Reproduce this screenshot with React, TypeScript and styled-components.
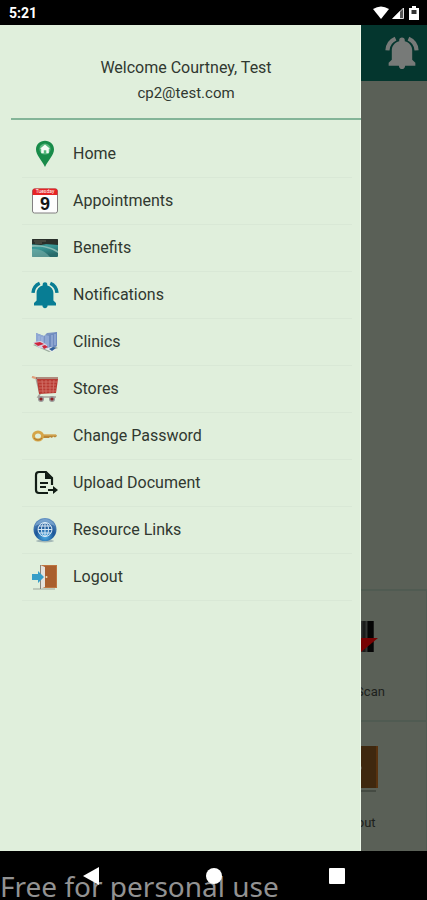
import React from "react";
import styled, { createGlobalStyle } from "styled-components";

const GlobalStyle = createGlobalStyle`
  *, *::before, *::after { box-sizing: border-box; }
  body { margin: 0; background: #000; }
  button { border: 0; padding: 0; background: none; font: inherit; cursor: pointer; }
  a { color: inherit; text-decoration: none; }
`;

const Screen = styled.div`
  min-height: 100vh;
  display: flex;
  flex-direction: column;
  background: #000;
  color: #303830;
  font-family: Roboto, "Liberation Sans", sans-serif;
`;

const StatusBar = styled.div`
  height: 25px;
  padding: 0 6px 0 9px;
  display: flex;
  align-items: center;
  justify-content: space-between;
  color: #fff;
  font-size: 14px;
  font-weight: 700;
  line-height: 20px;
`;

const StatusIcons = styled.div`
  display: flex;
  align-items: center;
  gap: 2px;
`;

const Stage = styled.div`
  position: relative;
  flex: 1;
  display: flex;
  flex-direction: column;
`;

const Page = styled.main`
  flex: 1;
  display: flex;
  flex-direction: column;
  justify-content: space-between;
  background: #5a6057;
`;

const AppBar = styled.header`
  height: 56px;
  padding: 0 8px;
  display: flex;
  align-items: center;
  justify-content: flex-end;
  background: #04362e;
`;

const BellButton = styled.button`
  display: flex;
`;

const Tiles = styled.div`
  display: grid;
  grid-template-columns: repeat(3, 1fr);
  grid-auto-rows: 131px;
`;

const Tile = styled.a`
  grid-column: 3;
  padding-top: 24px;
  display: flex;
  flex-direction: column;
  align-items: center;
  gap: 23px;
  border-top: 2px solid #505b52;
  border-right: 1px solid #505b52;
  color: #1d211c;
  font-size: 13px;
  line-height: 16px;
`;

const Drawer = styled.aside`
  position: absolute;
  inset: 0 66px 0 0;
  background: #e0efdc;
  box-shadow: inset -1px 0 #edf8e9;
`;

const Profile = styled.div`
  margin-left: 11px;
  padding: 33px 0 15px;
  display: flex;
  flex-direction: column;
  align-items: center;
  gap: 5px;
  border-bottom: 2px solid #84b598;
  line-height: 20px;
`;

const Welcome = styled.div`
  font-size: 16px;
`;

const Email = styled.div`
  font-size: 15px;
`;

const Menu = styled.nav`
  margin: 11px 9px 0 22px;
  display: flex;
  flex-direction: column;
`;

const MenuItem = styled.a`
  height: 47px;
  padding-left: 9px;
  display: flex;
  align-items: center;
  gap: 14px;
  border-bottom: 1px solid #d9e8d6;
  font-size: 16px;
  line-height: 20px;
`;

const NavBar = styled.footer`
  position: relative;
  height: 49px;
  display: grid;
  grid-template-columns: repeat(3, 1fr);
  justify-items: center;
  padding: 0 29px;
`;

const NavButton = styled.button`
  position: relative;
  z-index: 1;
  width: 48px;
  height: 49px;
  display: flex;
  align-items: center;
  justify-content: center;
`;

const Watermark = styled.div`
  position: absolute;
  left: 0;
  bottom: 0;
  color: #929292;
  font-family: "Noto Sans", sans-serif;
  font-size: 28px;
  line-height: 28px;
  white-space: nowrap;
`;

const Bell = ({ size, color }: { size: number; color: string }) => (
  <svg width={size} height={size} viewBox="0 0 28 28" fill="none" aria-hidden="true">
    <path
      d="M14 1.2c-1.4 0-2.3.9-2.3 2.2v1C7.9 5.4 5.600 8.4 5.600 12v7.5L3 22v2.400h8.400c.2 1.800 1.200 2.800 2.600 2.800s2.400-1 2.600-2.800H25V22L22.400 19.500V12c0-3.600-2.300-6.600-6.100-7.600v-1c0-1.300-.900-2.200-2.300-2.200z"
      fill={color}
    />
    <path d="M2 11.800C2.300 7.300 4.600 4 8.700 2.200M26 11.800C25.700 7.300 23.400 4 19.300 2.200" stroke={color} strokeWidth="3.400" />
  </svg>
);

const HomePin = () => (
  <svg width="28" height="28" viewBox="0 0 28 28" aria-hidden="true">
    <path d="M14 .8C8.800.8 5 4.700 5 9.600 5 15 10.500 20 14 27c3.500-7 9-12 9-17.400C23 4.700 19.200.8 14 .8z" fill="#188b49" />
    <circle cx="14" cy="9" r="5.600" fill="#56b77c" />
    <path d="M14 4.400l5 4.300h-1.200v4.600h-2.500v-3h-2.500v3h-2.600V8.700H9z" fill="#f4fbf4" />
  </svg>
);

const Calendar = () => (
  <svg width="28" height="28" viewBox="0 0 28 28" aria-hidden="true">
    <rect x="1.500" y="2" width="25" height="24" rx="2" fill="#fdfdfd" stroke="#817f80" />
    <path d="M1.500 8V4q0-2.500 2.500-2.500h20q2.500 0 2.500 2.500v4z" fill="#e62425" />
    <text x="14" y="6" textAnchor="middle" fontSize="5" fill="#fff" fontFamily="Roboto, sans-serif">Tuesday</text>
    <text x="14" y="23" textAnchor="middle" fontSize="18" fontWeight="700" fill="#151515" fontFamily="Liberation Sans, sans-serif">9</text>
  </svg>
);

const BenefitsCard = () => (
  <svg width="28" height="28" viewBox="0 0 28 28" aria-hidden="true">
    <defs>
      <linearGradient id="sea" x2="0.300" y2="1">
        <stop offset="0" stopColor="#284f4d" />
        <stop offset=".5" stopColor="#3b9c9a" />
        <stop offset="1" stopColor="#286b6b" />
      </linearGradient>
    </defs>
    <rect x="1" y="5" width="26" height="18" rx="1" fill="url(#sea)" />
    <path d="M1 6q0-1 1-1h24q1 0 1 1v5L15 10l-5 1-9-1z" fill="#2a302a" />
    <path d="M3 7h12M4 9h7" stroke="#5c5f50" />
    <path d="M1 13c8-1 17 0 26 6v-2C19 12 10 11 1 11z" fill="#9bc5bb" opacity=".8" />
    <path d="M1 15c8 0 13 2 18 8H2q-1 0-1-1z" fill="#7bb2ab" opacity=".6" />
  </svg>
);

const Clinic = () => (
  <svg width="28" height="28" viewBox="0 0 28 28" aria-hidden="true">
    <path d="M2 17l12-4 13 7-9 4z" fill="#9aab9c" />
    <path d="M5 5l8 3 3-3 10-1v14l-9 4-12-7z" fill="#7b94c2" />
    <path d="M5 5l8 3v9l-8-3zM14 7l4 1v14l-4-3z" fill="#8fa8d4" />
    <path d="M18 7l8-3v14l-8 4z" fill="#6f8cbf" />
    <path d="M8 8v7M11 9v6M21 7v12M24 6v11" stroke="#a9bce0" />
    <path d="M2 14l8-1 6 4v4l-8-1z" fill="#d4d2e2" />
    <path d="M3 15l6-1 4 2-6 2zM11 18l3-1 3 2-4 2z" fill="#cf263d" />
    <path d="M14 21l6-2 6 2-5 3z" fill="#e8ecec" />
    <path d="M18 21l4-2 3 1-4 3z" fill="#315f9a" />
  </svg>
);

const Cart = () => (
  <svg width="28" height="28" viewBox="0 0 28 28" aria-hidden="true">
    <path d="M1 2l4 1 4 16-2 3h18" fill="none" stroke="#a6a19b" strokeWidth="1.500" />
    <path d="M1 2l4 1" stroke="#e4a07a" strokeWidth="2" />
    <path d="M6 4h21l-2 14-17 1z" fill="#b83a32" />
    <path d="M7 7h19M8 10h17M8 13h17M8 16h17M11 5l1 13M15 5v13M19 5v13M23 5l-1 13" stroke="#d4766d" strokeWidth=".8" fill="none" />
    <path d="M5 3h22" stroke="#7c2820" />
    <circle cx="10" cy="24" r="3" fill="#999" />
    <circle cx="21" cy="24" r="3" fill="#999" />
    <circle cx="10" cy="24" r="1.600" fill="#8f2024" />
    <circle cx="21" cy="24" r="1.600" fill="#8f2024" />
  </svg>
);

const Key = () => (
  <svg width="28" height="28" viewBox="0 0 28 28" aria-hidden="true">
    <path d="M10 12.500h15l1 1.500-2 1.500-2-1-1 1.500-2-1-1 1h-8z" fill="#b98532" />
    <path d="M11 13h14" stroke="#e1ba69" />
    <ellipse cx="7" cy="14" rx="4.500" ry="4" fill="none" stroke="#d5a548" strokeWidth="3" />
    <path d="M3 16q4 4 8 0" fill="none" stroke="#ad782c" />
  </svg>
);

const Upload = () => (
  <svg width="28" height="28" viewBox="0 0 28 28" fill="none" stroke="#111c15" strokeWidth="2.200" aria-hidden="true">
    <path d="M17 24H8q-3 0-3-3V6q0-3 3-3h7l6 6v7" />
    <path d="M14 3v7h7z" fill="#111c15" stroke="none" />
    <path d="M9 14h8M9 18h6M17 21h7" />
    <path d="M22 17l5 4-5 4z" fill="#111c15" stroke="none" />
  </svg>
);

const Globe = () => (
  <svg width="28" height="28" viewBox="0 0 28 28" aria-hidden="true">
    <defs>
      <radialGradient id="ball" cx=".5" cy=".8" r=".8">
        <stop offset="0" stopColor="#4db0e8" />
        <stop offset=".5" stopColor="#1d5798" />
        <stop offset="1" stopColor="#6795c4" />
      </radialGradient>
    </defs>
    <ellipse cx="14" cy="25" rx="9" ry="1.500" fill="#a4b7b6" />
    <circle cx="14" cy="13.500" r="11.500" fill="url(#ball)" />
    <path d="M4 10c3-9 17-9 20 0-6-3-14-3-20 0z" fill="#9ac0e1" opacity=".5" />
    <g fill="none" stroke="#d7e8f5">
      <circle cx="14" cy="13.500" r="7" />
      <ellipse cx="14" cy="13.500" rx="3.500" ry="7" />
      <path d="M14 6.500v14M7 13.500h14M8 10h12M8 17h12" />
    </g>
  </svg>
);

const Door = () => (
  <svg width="28" height="28" viewBox="0 0 28 28" aria-hidden="true">
    <path d="M2 26h22" stroke="#9ca59a" />
    <path d="M10 2h16v23H10z" fill="#bd7440" />
    <path d="M13 3h12v21H13z" fill="#a95f2e" />
    <path d="M9 2l5 2v20l-5 2z" fill="#e4e1dc" />
    <path d="M9.500 2v24" stroke="#88857c" />
    <circle cx="15.500" cy="14" r="1" fill="#eee0bd" />
    <path d="M1 11h6V8l6 6-6 6v-3H1z" fill="#369dc7" />
  </svg>
);

const ScanTile = () => (
  <svg width="46" height="46" viewBox="0 0 46 46" aria-hidden="true">
    <path d="M2 6h40v31H2z" fill="#343634" />
    <path d="M5 6v31M11 6v31M19 6v31M25 6v31M32 6v31" stroke="#1b1c1b" strokeWidth="3" />
    <path d="M38.500 6v31" stroke="#050505" strokeWidth="6" />
    <path d="M0 23h46L23 42z" fill="#780303" />
  </svg>
);

const LogoutTile = () => (
  <svg width="46" height="46" viewBox="0 0 46 46" aria-hidden="true">
    <path d="M2 45h42" stroke="#454b43" strokeWidth="2" />
    <path d="M14 0h32v42H14z" fill="#3f280f" />
    <path d="M45 0v42" stroke="#58320f" strokeWidth="2" />
    <circle cx="28" cy="22" r="2" fill="#5a5044" />
    <path d="M1 18h10v-5l9 9-9 9v-5H1z" fill="#153f50" />
  </svg>
);

const menuItems = [
  { label: "Home", icon: <HomePin /> },
  { label: "Appointments", icon: <Calendar /> },
  { label: "Benefits", icon: <BenefitsCard /> },
  { label: "Notifications", icon: <Bell size={28} color="#087d94" /> },
  { label: "Clinics", icon: <Clinic /> },
  { label: "Stores", icon: <Cart /> },
  { label: "Change Password", icon: <Key /> },
  { label: "Upload Document", icon: <Upload /> },
  { label: "Resource Links", icon: <Globe /> },
  { label: "Logout", icon: <Door /> },
];

export default function App() {
  return (
    <>
      <GlobalStyle />
      <Screen>
        <StatusBar>
          <time>5:21</time>
          <StatusIcons>
            <svg width="16" height="14" viewBox="0 0 16 14" aria-hidden="true">
              <path d="M0 3Q8-2 16 3L8 13z" fill="#fff" />
            </svg>
            <svg width="14" height="14" viewBox="0 0 14 14" aria-hidden="true">
              <path d="M12.500 2v10.500H2z" fill="#555" stroke="#ddd" />
              <path d="M9 5v8H1z" fill="#fff" />
            </svg>
            <svg width="14" height="14" viewBox="0 0 14 14" aria-hidden="true">
              <path d="M5 0h4v2h3v12H2V2h3z" fill="#fff" />
              <path d="M4.500 4h5v4h-5z" fill="#333" />
            </svg>
          </StatusIcons>
        </StatusBar>
        <Stage>
          <Page>
            <AppBar>
              <BellButton aria-label="Notifications">
                <Bell size={34} color="#777a78" />
              </BellButton>
            </AppBar>
            <Tiles>
              <Tile href="#scan"><ScanTile />Card Scan</Tile>
              <Tile href="#logout"><LogoutTile />Logout</Tile>
            </Tiles>
          </Page>
          <Drawer>
            <Profile>
              <Welcome>Welcome Courtney, Test</Welcome>
              <Email>cp2@test.com</Email>
            </Profile>
            <Menu>
              {menuItems.map(({ label, icon }) => (
                <MenuItem key={label} href={`#${label.toLowerCase().replace(" ", "-")}`}>
                  {icon}
                  {label}
                </MenuItem>
              ))}
            </Menu>
          </Drawer>
        </Stage>
        <NavBar>
          <Watermark>Free for personal use</Watermark>
          <NavButton aria-label="Back">
            <svg width="16" height="18" viewBox="0 0 16 18"><path d="M0 9L16 0v18z" fill="#fff" /></svg>
          </NavButton>
          <NavButton aria-label="Home">
            <svg width="16" height="16" viewBox="0 0 16 16"><circle cx="8" cy="8" r="8" fill="#fff" /></svg>
          </NavButton>
          <NavButton aria-label="Recent apps">
            <svg width="16" height="16" viewBox="0 0 16 16"><rect width="16" height="16" rx="1" fill="#fff" /></svg>
          </NavButton>
        </NavBar>
      </Screen>
    </>
  );
}
